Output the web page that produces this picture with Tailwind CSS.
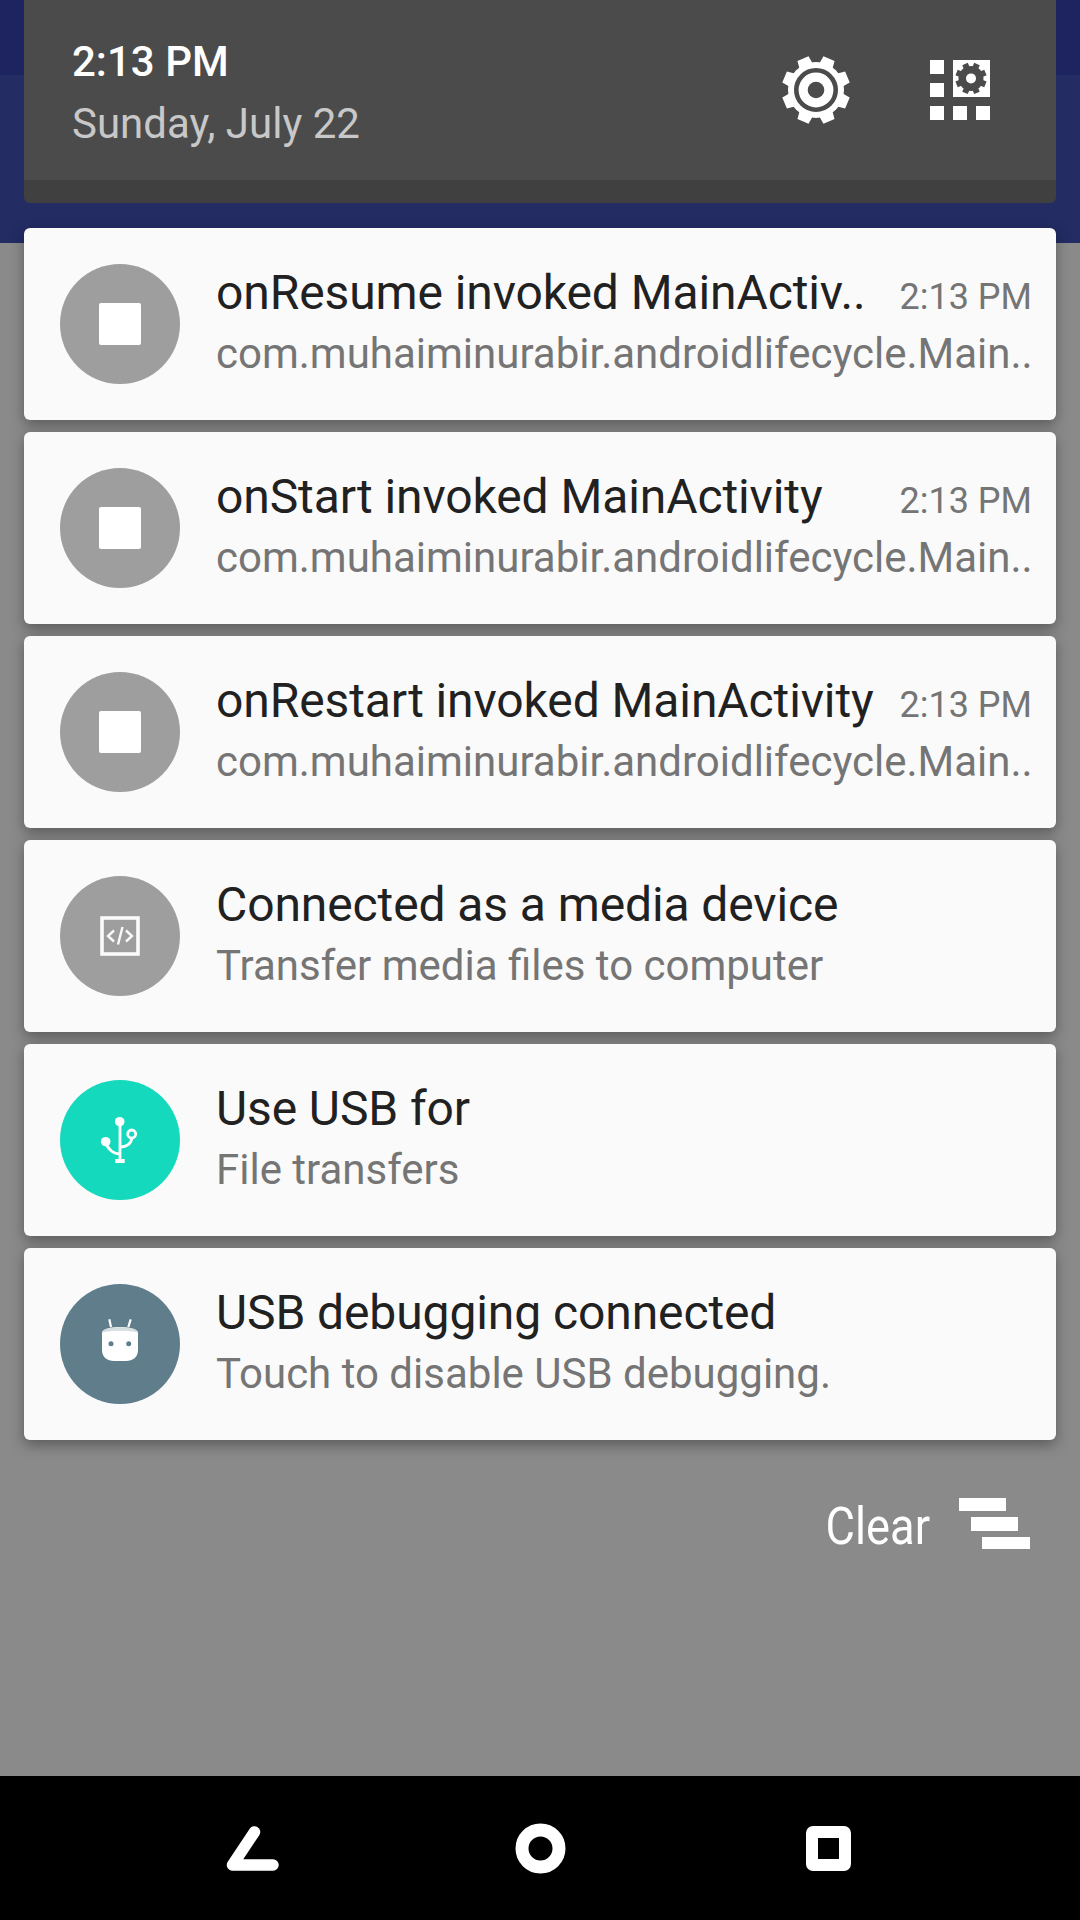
<!DOCTYPE html>
<html>
<head>
<meta charset="utf-8">
<script src="https://cdn.jsdelivr.net/npm/@tailwindcss/browser@4"></script>
</head>
<body class="m-0">
<div class="w-[1080px] h-[1920px] flex flex-col overflow-hidden font-['Roboto',sans-serif] bg-[linear-gradient(180deg,#1d2460_0px,#1d2460_75px,#232c63_75px,#232c63_243px,#8a8a8a_243px,#8a8a8a_100%)]">
  <div class="h-[1776px] flex flex-col px-[24px] shrink-0">
    <!-- header -->
    <div class="h-[203px] rounded-b-[6px] bg-[#404040] shrink-0 overflow-hidden">
      <div class="h-[180px] bg-[#4b4b4b] flex items-start justify-between pl-[48px]">
        <div class="flex flex-col pt-[38px]">
          <div class="text-[42px] leading-[48px] font-medium text-white">2:13 PM</div>
          <div class="text-[42px] leading-[48px] mt-[14px] text-[#c8c8c8]">Sunday, July 22</div>
        </div>
        <div class="flex items-start">
          <svg class="w-[80px] h-[80px] mt-[50px] mr-[74px]" viewBox="-40 -40 80 80">
            <g fill="#fff">
              <circle r="28"/>
              <path d="M-7 -26 L-6 -34 L6 -34 L7 -26Z" transform="rotate(22.5)"/><path d="M-7 -26 L-6 -34 L6 -34 L7 -26Z" transform="rotate(-22.5)"/><path d="M-7 -26 L-6 -34 L6 -34 L7 -26Z" transform="rotate(67.5)"/><path d="M-7 -26 L-6 -34 L6 -34 L7 -26Z" transform="rotate(112.5)"/><path d="M-7 -26 L-6 -34 L6 -34 L7 -26Z" transform="rotate(157.5)"/><path d="M-7 -26 L-6 -34 L6 -34 L7 -26Z" transform="rotate(202.5)"/><path d="M-7 -26 L-6 -34 L6 -34 L7 -26Z" transform="rotate(247.5)"/><path d="M-7 -26 L-6 -34 L6 -34 L7 -26Z" transform="rotate(292.5)"/>
            </g>
            <circle r="19.7" fill="none" stroke="#4b4b4b" stroke-width="4.6"/>
            <circle r="8.3" fill="#4b4b4b"/>
          </svg>
          <svg class="w-[60px] h-[60px] mt-[60px] mr-[66px]" viewBox="0 0 60 60">
            <g fill="#fff">
              <rect width="14" height="14"/><rect y="23" width="14" height="14"/><rect y="46" width="14" height="14"/><rect x="23" y="46" width="14" height="14"/><rect x="46" y="46" width="14" height="14"/>
              <rect x="23" width="37" height="37"/>
            </g>
            <g transform="translate(41 18.4)">
              <g fill="#4b4b4b">
                <circle r="12.5"/>
                <rect x="-3" y="-15.6" width="6" height="31.2" transform="rotate(22.5)"/>
                <rect x="-3" y="-15.6" width="6" height="31.2" transform="rotate(67.5)"/>
                <rect x="-3" y="-15.6" width="6" height="31.2" transform="rotate(112.5)"/>
                <rect x="-3" y="-15.6" width="6" height="31.2" transform="rotate(157.5)"/>
              </g>
              <circle r="5" fill="#fff"/>
            </g>
          </svg>
        </div>
      </div>
    </div>
    <!-- cards -->
    <div class="flex flex-col gap-[12px] mt-[25px]">
      <div class="h-[192px] rounded-[6px] bg-[#fafafa] shadow-[0_5px_14px_rgba(0,0,0,0.35)] flex items-center pl-[36px] pr-[24px] shrink-0">
        <div class="w-[120px] h-[120px] rounded-full bg-[#9e9e9e] flex items-center justify-center shrink-0"><div class="w-[42px] h-[42px] rounded-[2px] bg-white"></div></div>
        <div class="ml-[36px] flex-1 min-w-0">
          <div class="flex items-baseline justify-between h-[60px] -mt-[1px] mb-[1px] leading-[60px] whitespace-nowrap"><span class="text-[48px] tracking-[-0.1px] text-[#212121]">onResume invoked MainActiv..</span><span class="text-[36px] text-[#757575]">2:13 PM</span></div>
          <div class="text-[42px] leading-[60px] text-[#757575] whitespace-nowrap">com.muhaiminurabir.androidlifecycle.Main..</div>
        </div>
      </div>
      <div class="h-[192px] rounded-[6px] bg-[#fafafa] shadow-[0_5px_14px_rgba(0,0,0,0.35)] flex items-center pl-[36px] pr-[24px] shrink-0">
        <div class="w-[120px] h-[120px] rounded-full bg-[#9e9e9e] flex items-center justify-center shrink-0"><div class="w-[42px] h-[42px] rounded-[2px] bg-white"></div></div>
        <div class="ml-[36px] flex-1 min-w-0">
          <div class="flex items-baseline justify-between h-[60px] -mt-[1px] mb-[1px] leading-[60px] whitespace-nowrap"><span class="text-[48px] tracking-[-0.1px] text-[#212121]">onStart invoked MainActivity</span><span class="text-[36px] text-[#757575]">2:13 PM</span></div>
          <div class="text-[42px] leading-[60px] text-[#757575] whitespace-nowrap">com.muhaiminurabir.androidlifecycle.Main..</div>
        </div>
      </div>
      <div class="h-[192px] rounded-[6px] bg-[#fafafa] shadow-[0_5px_14px_rgba(0,0,0,0.35)] flex items-center pl-[36px] pr-[24px] shrink-0">
        <div class="w-[120px] h-[120px] rounded-full bg-[#9e9e9e] flex items-center justify-center shrink-0"><div class="w-[42px] h-[42px] rounded-[2px] bg-white"></div></div>
        <div class="ml-[36px] flex-1 min-w-0">
          <div class="flex items-baseline justify-between h-[60px] -mt-[1px] mb-[1px] leading-[60px] whitespace-nowrap"><span class="text-[48px] tracking-[-0.1px] text-[#212121]">onRestart invoked MainActivity</span><span class="text-[36px] text-[#757575]">2:13 PM</span></div>
          <div class="text-[42px] leading-[60px] text-[#757575] whitespace-nowrap">com.muhaiminurabir.androidlifecycle.Main..</div>
        </div>
      </div>
      <div class="h-[192px] rounded-[6px] bg-[#fafafa] shadow-[0_5px_14px_rgba(0,0,0,0.35)] flex items-center pl-[36px] pr-[24px] shrink-0">
        <div class="w-[120px] h-[120px] rounded-full bg-[#9e9e9e] flex items-center justify-center shrink-0">
          <svg class="w-[40px] h-[40px]" viewBox="0 0 40 40"><rect x="2" y="2" width="36" height="36" fill="none" stroke="#fafafa" stroke-width="3.6"/><path d="M14 14.5 L8 20 L14 25.5 M26 14.5 L32 20 L26 25.5 M22.5 11 L18 28.5" fill="none" stroke="#fafafa" stroke-width="2.4"/></svg>
        </div>
        <div class="ml-[36px] flex-1 min-w-0">
          <div class="h-[60px] -mt-[1px] mb-[1px] text-[48px] tracking-[-0.1px] leading-[60px] text-[#212121] whitespace-nowrap">Connected as a media device</div>
          <div class="text-[42px] leading-[60px] text-[#757575] whitespace-nowrap">Transfer media files to computer</div>
        </div>
      </div>
      <div class="h-[192px] rounded-[6px] bg-[#fafafa] shadow-[0_5px_14px_rgba(0,0,0,0.35)] flex items-center pl-[36px] pr-[24px] shrink-0">
        <div class="w-[120px] h-[120px] rounded-full bg-[#14d9bd] flex items-center justify-center shrink-0">
          <svg class="w-[60px] h-[60px]" viewBox="0 0 60 60"><g fill="none" stroke="#fff" stroke-width="2.8"><path d="M30 11 V51"/><path d="M15.700 32 C18 40 24 44 30 44"/><path d="M41.700 28 C41.700 33 37 37 30 37"/><circle cx="41.700" cy="24" r="4"/></g><circle cx="29.700" cy="11.700" r="4.800" fill="#fff"/><circle cx="15.700" cy="31.700" r="4.800" fill="#fff"/><rect x="25.300" y="49" width="9.400" height="4" fill="#fff"/></svg>
        </div>
        <div class="ml-[36px] flex-1 min-w-0">
          <div class="h-[60px] -mt-[1px] mb-[1px] text-[48px] tracking-[-0.1px] leading-[60px] text-[#212121] whitespace-nowrap">Use USB for</div>
          <div class="text-[42px] leading-[60px] text-[#757575] whitespace-nowrap">File transfers</div>
        </div>
      </div>
      <div class="h-[192px] rounded-[6px] bg-[#fafafa] shadow-[0_5px_14px_rgba(0,0,0,0.35)] flex items-center pl-[36px] pr-[24px] shrink-0">
        <div class="w-[120px] h-[120px] rounded-full bg-[#607d8b] flex items-center justify-center shrink-0">
          <svg class="w-[60px] h-[60px]" viewBox="0 0 60 60"><path d="M12 19 C12 11 48 11 48 19 V36 C48 43 43 47 36 47 H24 C17 47 12 43 12 36Z" fill="#fff"/><path d="M12 18.500 C12 11.500 48 11.500 48 18.500 C40 16 20 16 12 18.500Z" fill="#d5dde0"/><path d="M19.300 5.300 L21 13 M40.700 5.300 L38.300 13" stroke="#fff" stroke-width="2.2"/><circle cx="21" cy="29.700" r="2.500" fill="#607d8b"/><circle cx="38.700" cy="29.700" r="2.500" fill="#607d8b"/></svg>
        </div>
        <div class="ml-[36px] flex-1 min-w-0">
          <div class="h-[60px] -mt-[1px] mb-[1px] text-[48px] tracking-[-0.1px] leading-[60px] text-[#212121] whitespace-nowrap">USB debugging connected</div>
          <div class="text-[42px] leading-[60px] text-[#757575] whitespace-nowrap">Touch to disable USB debugging.</div>
        </div>
      </div>
    </div>
    <!-- clear -->
    <div class="flex items-start justify-end mt-[58px] pr-[26px]">
      <span class="text-[52px] leading-[60px] -mt-[1px] text-white origin-right scale-x-[0.87] mr-[29px]">Clear</span>
      <svg class="w-[71px] h-[51px]" viewBox="0 0 71 51"><g fill="#fff"><rect width="47" height="13"/><rect x="12" y="19" width="47" height="14"/><rect x="23" y="39" width="48" height="12"/></g></svg>
    </div>
  </div>
  <!-- nav -->
  <div class="h-[144px] bg-black flex items-center justify-center shrink-0">
    <div class="grid grid-cols-3 w-[864px] justify-items-center items-center">
      <svg class="w-[53px] h-[45px]" viewBox="0 0 53 45"><path d="M28.500 6 L6.500 39 H47" fill="none" stroke="#fff" stroke-width="11.500" stroke-linecap="round" stroke-linejoin="round"/></svg>
      <svg class="w-[51px] h-[51px]" viewBox="0 0 51 51"><circle cx="25.500" cy="25.500" r="18.500" fill="none" stroke="#fff" stroke-width="13"/></svg>
      <svg class="w-[45px] h-[45px]" viewBox="0 0 45 45"><rect x="6" y="6" width="33" height="33" rx="1" fill="none" stroke="#fff" stroke-width="12"/></svg>
    </div>
  </div>
</div>
</body>
</html>
